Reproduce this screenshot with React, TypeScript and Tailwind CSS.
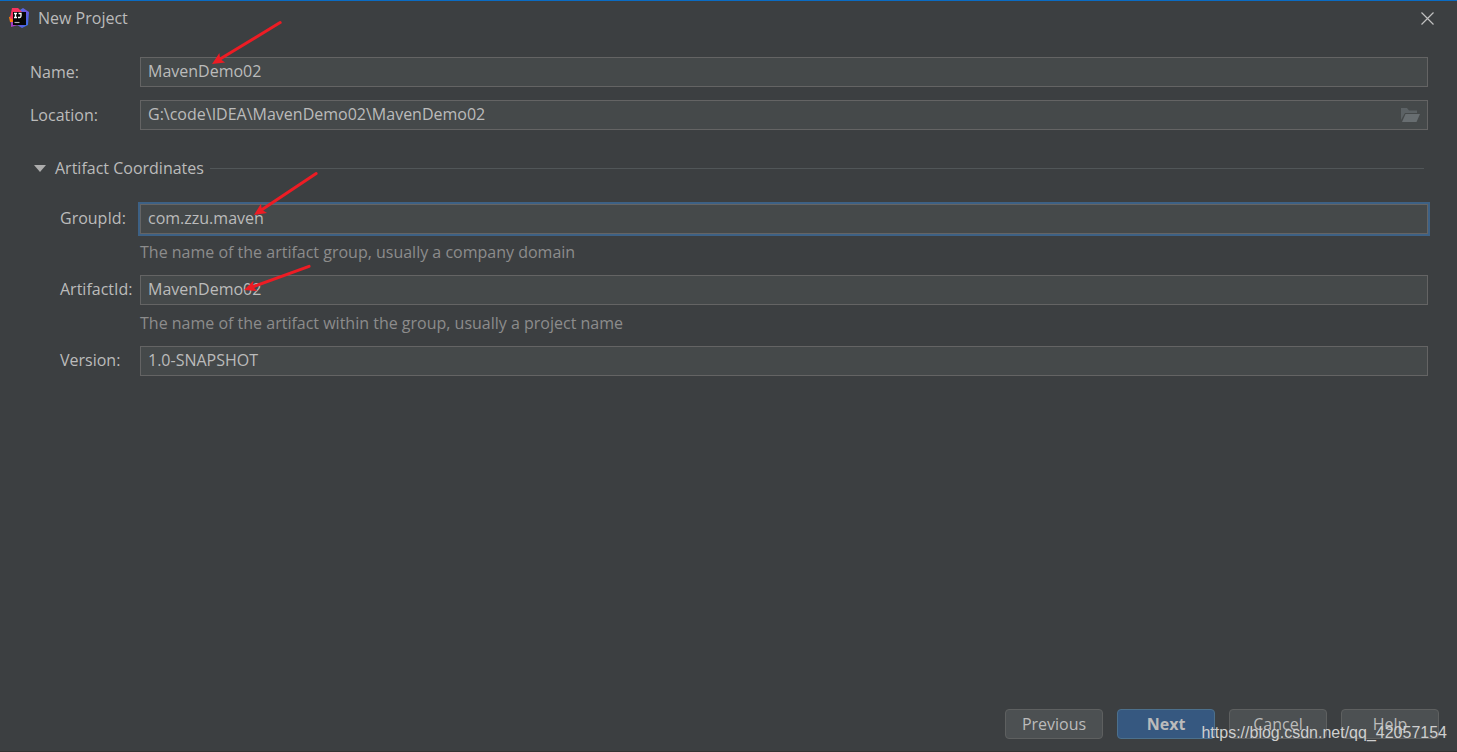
import { useState } from "react"
import type { InputHTMLAttributes, ReactNode } from "react"
import clsx from "clsx"

const inputClass =
  "block h-[30px] w-full border border-[#646464] bg-[#45494a] px-[7px] pb-0.5 text-[#bbbbbb] outline-none"

type FieldProps = InputHTMLAttributes<HTMLInputElement> & {
  label: string
  hint?: string
  nested?: boolean
  active?: boolean
  icon?: ReactNode
}

function Field({ id, label, hint, nested, active, icon, ...props }: FieldProps) {
  return (
    <div className="flex">
      <label htmlFor={id} className={clsx("w-[110px] shrink-0", nested ? "pl-[30px] leading-7" : "leading-[30px]")}>
        {label}
      </label>
      <div className="min-w-0 flex-1">
        <div className="relative">
          <input
            id={id}
            type="text"
            spellCheck={false}
            className={clsx(inputClass, active && "border-[#466d94] ring-2 ring-[#3d6185]")}
            {...props}
          />
          {icon}
        </div>
        {hint && <p className="mt-2 leading-5 text-[#8c8c8c]">{hint}</p>}
      </div>
    </div>
  )
}

function IdeaLogo() {
  return (
    <svg width="20" height="20" viewBox="0 0 20 20" aria-hidden="true">
      <defs>
        <linearGradient id="logo-blue" x1="0" y1="0" x2="1" y2="1">
          <stop offset="0" stopColor="#2f7df0" />
          <stop offset="0.45" stopColor="#7154dc" />
          <stop offset="1" stopColor="#2676ea" />
        </linearGradient>
        <linearGradient id="logo-pink" x1="0" y1="1" x2="1" y2="0">
          <stop offset="0" stopColor="#f0335c" />
          <stop offset="1" stopColor="#fe315d" />
        </linearGradient>
      </defs>
      <path d="M11 2 14 0l6 4-1 13-6 3-5-3z" fill="url(#logo-blue)" />
      <path d="M0 9l4-1 1 7-4-1z" fill="#f97a12" />
      <path d="M3 0h6l4 4-7 9-5-3z" fill="url(#logo-pink)" />
      <path d="M2 14h5l2 3-7 2z" fill="#a43bc4" />
      <rect x="4" y="4" width="13" height="13" fill="#050505" />
      <path d="M5 5.500h3M6.500 5.500v4M5 9.500h3M9.500 5.500h2.500V8q0 1.500-1.500 1.500H9" fill="none" stroke="#fff" strokeWidth="1.300" />
      <path d="M5.500 14.500h5" stroke="#b0b0b0" strokeWidth="1.200" />
    </svg>
  )
}

function FolderIcon() {
  return (
    <svg width="19" height="15" viewBox="0 0 19 15" aria-hidden="true">
      <path d="M0 0h6l2 2.500h8V5H4L0 12z" fill="#5c6265" />
      <path d="M4.500 6H19l-3.500 8H1z" fill="#686e71" />
    </svg>
  )
}

const arrows = [
  { x1: 281, y1: 21, x2: 212, y2: 63 },
  { x1: 317, y1: 172, x2: 254, y2: 214 },
  { x1: 310, y1: 265, x2: 244, y2: 289 },
]

function Arrows() {
  return (
    <svg className="pointer-events-none absolute top-0 left-0" width="340" height="310" aria-hidden="true">
      {arrows.map(({ x1, y1, x2, y2 }) => {
        const length = Math.hypot(x2 - x1, y2 - y1)
        const angle = (Math.atan2(y2 - y1, x2 - x1) * 180) / Math.PI
        return (
          <g key={y1} transform={`translate(${x2} ${y2}) rotate(${angle})`}>
            <path d={`M${-length + 1} 0H-8`} stroke="#ed1c24" strokeWidth="3" strokeLinecap="round" />
            <path d="M0 0-12-5.500-9.500 0-12 5.500z" fill="#ed1c24" />
          </g>
        )
      })}
    </svg>
  )
}

const buttons = ["Previous", "Next", "Cancel", "Help"]

export default function App() {
  const [name, setName] = useState("MavenDemo02")
  const [location, setLocation] = useState("G:\\code\\IDEA\\MavenDemo02\\MavenDemo02")
  const [groupId, setGroupId] = useState("com.zzu.maven")
  const [artifactId, setArtifactId] = useState("MavenDemo02")
  const [version, setVersion] = useState("1.0-SNAPSHOT")
  const [open, setOpen] = useState(true)

  return (
    <div className="relative flex min-h-screen flex-col border-t border-b border-t-[#0a6cc4] border-b-[#323232] bg-[#3c3f41] font-['Open_Sans',sans-serif] text-base text-[#bbbbbb]">
      <header className="flex h-[34px] items-center pr-[23px] pl-[9px]">
        <IdeaLogo />
        <h1 className="ml-[9px] flex-1">New Project</h1>
        <button type="button" aria-label="Close">
          <svg width="13" height="13" viewBox="0 0 13 13" aria-hidden="true">
            <path d="M.5.5l12 12M12.500.5l-12 12" stroke="#c0c0c0" strokeWidth="1.200" />
          </svg>
        </button>
      </header>

      <main className="flex-1 pt-[22px] pr-[29px] pl-[30px]">
        <div className="space-y-[13px]">
          <Field id="name" label="Name:" value={name} onChange={(e) => setName(e.target.value)} />
          <Field
            id="location"
            label="Location:"
            value={location}
            onChange={(e) => setLocation(e.target.value)}
            icon={
              <button type="button" aria-label="Browse" className="absolute top-2 right-2">
                <FolderIcon />
              </button>
            }
          />
        </div>

        <div className="mt-[26px] flex items-center">
          <button type="button" aria-expanded={open} onClick={() => setOpen(!open)} className="flex items-center pl-1">
            <svg width="12" height="7" viewBox="0 0 12 7" className={clsx(!open && "-rotate-90")} aria-hidden="true">
              <path d="M0 0h12L6 7z" fill="#adadad" />
            </svg>
            <span className="ml-[9px]">Artifact Coordinates</span>
          </button>
          <div className="mr-1 ml-1.5 h-px flex-1 bg-[#515658]" />
        </div>

        {open && (
          <div className="mt-6 space-y-[13px]">
            <Field
              id="groupId"
              label="GroupId:"
              nested
              active
              hint="The name of the artifact group, usually a company domain"
              value={groupId}
              onChange={(e) => setGroupId(e.target.value)}
            />
            <Field
              id="artifactId"
              label="ArtifactId:"
              nested
              hint="The name of the artifact within the group, usually a project name"
              value={artifactId}
              onChange={(e) => setArtifactId(e.target.value)}
            />
            <Field id="version" label="Version:" nested value={version} onChange={(e) => setVersion(e.target.value)} />
          </div>
        )}
      </main>

      <footer className="flex justify-end gap-[14px] pr-[18px] pb-3">
        {buttons.map((label) => (
          <button
            key={label}
            type="button"
            className={clsx(
              "h-[30px] w-[98px] rounded border leading-7",
              label === "Next" ? "border-[#4c708c] bg-[#365880] font-bold" : "border-[#5e6060] bg-[#4c5052]"
            )}
          >
            {label}
          </button>
        ))}
      </footer>

      <Arrows />
      <span className="pointer-events-none absolute right-[10px] bottom-[6px] font-['Liberation_Sans',Arial,sans-serif] leading-6 text-[#cfcfcf]">
        https://blog.csdn.net/qq_42057154
      </span>
    </div>
  )
}
